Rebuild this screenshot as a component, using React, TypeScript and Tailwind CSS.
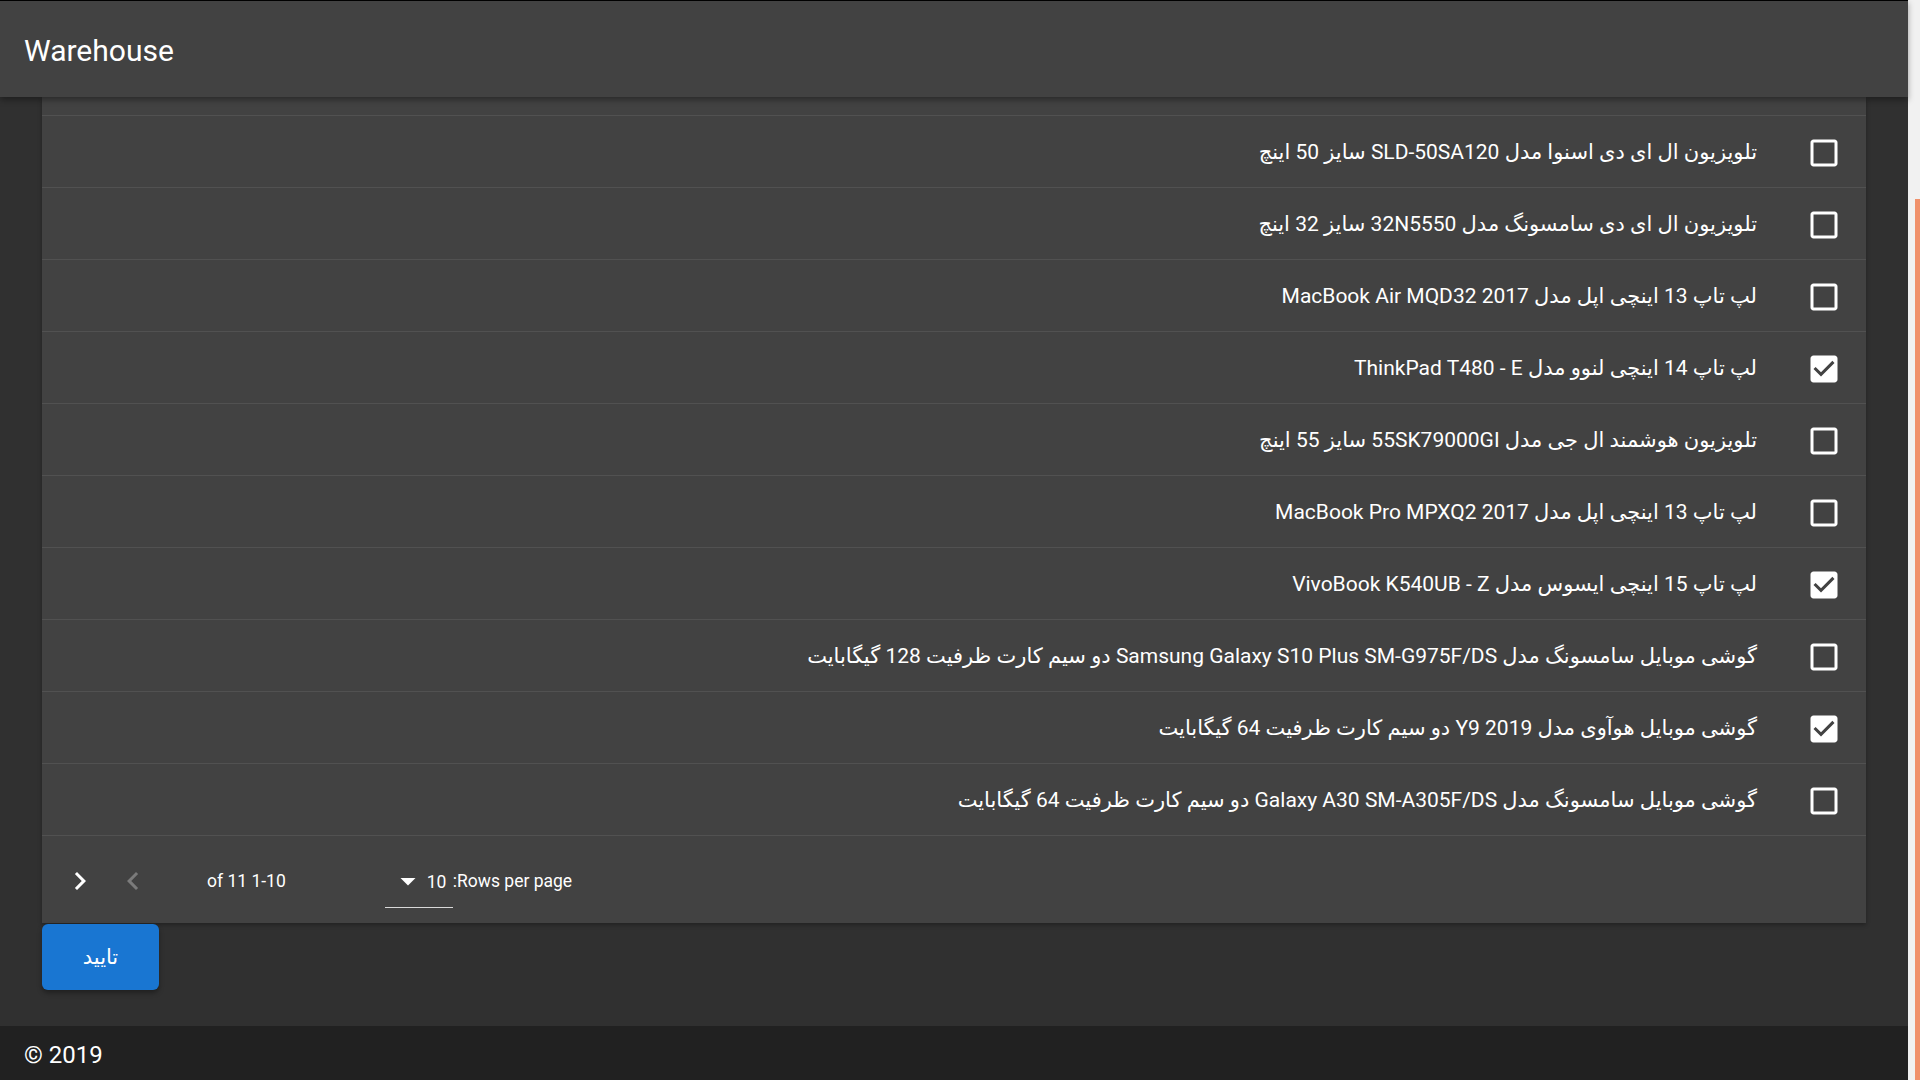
import React from "react";

const products = [
  { name: "تلویزیون ال ای دی اسنوا مدل SLD-50SA120 سایز 50 اینچ", checked: false },
  { name: "تلویزیون ال ای دی سامسونگ مدل 32N5550 سایز 32 اینچ", checked: false },
  { name: "لپ تاپ 13 اینچی اپل مدل MacBook Air MQD32 2017", checked: false },
  { name: "لپ تاپ 14 اینچی لنوو مدل ThinkPad T480 - E", checked: true },
  { name: "تلویزیون هوشمند ال جی مدل 55SK79000GI سایز 55 اینچ", checked: false },
  { name: "لپ تاپ 13 اینچی اپل مدل MacBook Pro MPXQ2 2017", checked: false },
  { name: "لپ تاپ 15 اینچی ایسوس مدل VivoBook K540UB - Z", checked: true },
  { name: "گوشی موبایل سامسونگ مدل Samsung Galaxy S10 Plus SM-G975F/DS دو سیم کارت ظرفیت 128 گیگابایت", checked: false },
  { name: "گوشی موبایل هوآوی مدل Y9 2019 دو سیم کارت ظرفیت 64 گیگابایت", checked: true },
  { name: "گوشی موبایل سامسونگ مدل Galaxy A30 SM-A305F/DS دو سیم کارت ظرفیت 64 گیگابایت", checked: false },
];

function CheckIcon({ checked }: { checked: boolean }) {
  return (
    <svg viewBox="0 0 24 24" className="w-[36px] h-[36px] fill-white">
      {checked ? (
        <path d="M19 3H5c-1.11 0-2 .9-2 2v14c0 1.1.89 2 2 2h14c1.11 0 2-.9 2-2V5c0-1.1-.89-2-2-2zm-9 14l-5-5 1.41-1.41L10 14.17l7.59-7.59L19 8l-9 9z" />
      ) : (
        <path d="M19 5v14H5V5h14m0-2H5c-1.1 0-2 .9-2 2v14c0 1.1.9 2 2 2h14c1.1 0 2-.9 2-2V5c0-1.1-.9-2-2-2z" />
      )}
    </svg>
  );
}

export default function App() {
  return (
    <div className="h-screen w-full flex overflow-hidden font-['Roboto','DejaVu_Sans',sans-serif] text-white">
      {/* page column */}
      <div className="flex-1 flex flex-col min-w-0">
        {/* app bar */}
        <header className="relative z-10 h-[97px] shrink-0 border-t border-black bg-[#424242] flex items-center px-6 pt-[3px] shadow-[0_3px_6px_rgba(0,0,0,0.35)]">
          <h1 className="text-[30px] leading-none">Warehouse</h1>
        </header>

        {/* main */}
        <main className="flex-1 bg-[#303030] px-[42px] flex flex-col items-start">
          <div className="w-full bg-[#424242] shadow-[0_2px_4px_rgba(0,0,0,0.3)]">
            <div className="h-[19px] border-b border-[#515151]" />
            <div dir="rtl">
              {products.map((p) => (
                <div key={p.name} className="h-[72px] border-b border-[#515151] flex items-center pr-[24px] pt-[2px]">
                  <CheckIcon checked={p.checked} />
                  <span className="mr-[49px] text-[21px] text-white">{p.name}</span>
                </div>
              ))}
            </div>

            {/* pagination */}
            <div className="h-[87px] flex items-center pl-[20px] pt-[3px] text-[17.5px]">
              <svg viewBox="0 0 24 24" className="w-[36px] h-[36px] fill-white">
                <path d="M10 6L8.59 7.41 13.17 12l-4.58 4.59L10 18l6-6z" />
              </svg>
              <svg viewBox="0 0 24 24" className="ml-[17px] w-[36px] h-[36px] fill-white/30">
                <path d="M15.41 7.41L14 6l-6 6 6 6 1.41-1.41L10.83 12z" />
              </svg>
              <span dir="rtl" className="ml-[56px]">1-10 of 11</span>
              <div className="ml-[99px] mt-[6px] relative flex items-center h-[48px] w-[68px] border-b border-white/80">
                <svg viewBox="0 0 24 24" className="absolute left-[5px] top-[3px] w-[36px] h-[36px] fill-white">
                  <path d="M7 10l5 5 5-5z" />
                </svg>
                <span className="absolute left-[42px] top-[9px]">10</span>
              </div>
              <span dir="rtl">Rows per page:</span>
            </div>
          </div>

          <button className="mt-px h-[66px] w-[117px] rounded-[6px] bg-[#1976d2] pt-[2px] text-[21px] text-white shadow-[0_3px_5px_rgba(0,0,0,0.35)]">
            تایید
          </button>
        </main>

        {/* footer */}
        <footer className="h-[54px] shrink-0 bg-[#212121] flex items-center px-6 pt-[4px]">
          <span className="text-[24px]">© 2019</span>
        </footer>
      </div>

      {/* scrollbar */}
      <div className="w-[12px] shrink-0 bg-[#f1f1f1] flex flex-col pl-[7px] pt-[199px]">
        <div className="flex-1 bg-[#f0916b]" />
      </div>
    </div>
  );
}
